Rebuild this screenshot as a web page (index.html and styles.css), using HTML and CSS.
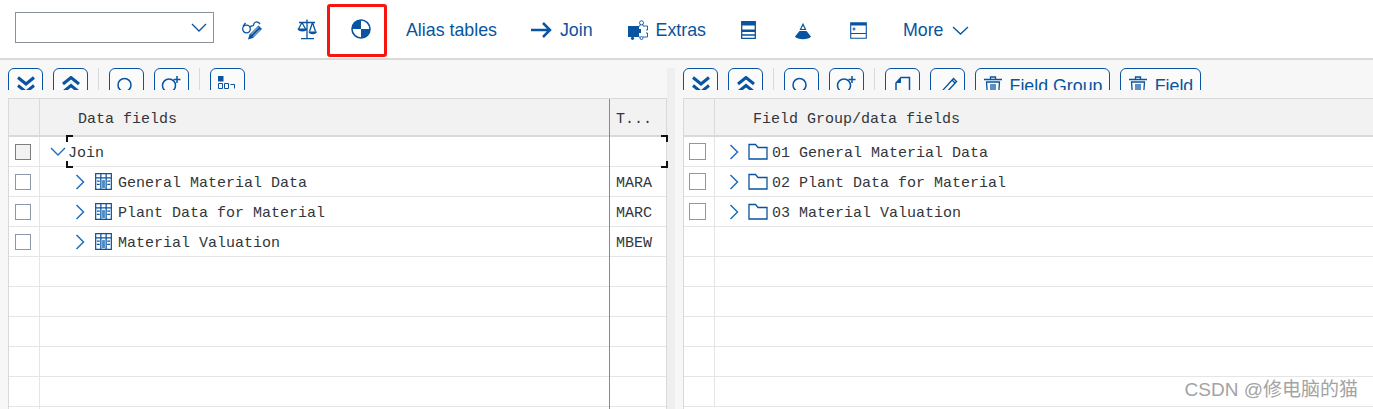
FILE: index.html
```html
<!DOCTYPE html>
<html lang="en">
<head>
<meta charset="utf-8">
<title>Join</title>
<link rel="stylesheet" href="styles.css">
</head>
<body>
<svg class="defs" width="0" height="0">
  <symbol id="down" viewBox="0 0 24 18"><path d="M4 1.500 12 8l8-6.500M4 9.500 12 16l8-6.500" fill="none" stroke="#0854a0" stroke-width="3"/></symbol>
  <symbol id="up" viewBox="0 0 24 18"><path d="M4 8 12 1.500 20 8M4 16l8-6.500 8 6.500" fill="none" stroke="#0854a0" stroke-width="3"/></symbol>
  <symbol id="search" viewBox="0 0 24 24"><circle cx="9.500" cy="9" r="6.500" fill="none" stroke="#0854a0" stroke-width="1.500"/></symbol>
  <symbol id="searchplus" viewBox="0 0 26 24"><circle cx="10" cy="9.500" r="6.500" fill="none" stroke="#0854a0" stroke-width="1.500"/><path d="M18 0v7M14.500 3.500h7" stroke="#0854a0" stroke-width="1.500"/></symbol>
  <symbol id="trash" viewBox="0 0 20 20"><path d="M1 3.500h18M7.500 3.500V1h5v2.500M3 6h14M3.500 6l1 14h11l1-14M8 8v12M10 8v12M12 8v12" fill="none" stroke="#0854a0" stroke-width="1.300"/></symbol>
  <symbol id="tbl" viewBox="0 0 18 18"><path d="M.7.7h16.600v16.600H.7zM6.200.7v16.600M11.800.7v16.600" fill="none" stroke="#0854a0" stroke-width="1.300"/><path d="M1 4.500h16v1.300H1zM2 8h3v1.200H2zM2 11.500h3v1.200H2zM13 8h3v1.200h-3zM13 11.500h3v1.200h-3z" fill="#0854a0"/><path d="M7.500 7.500h3v8.500h-3z" fill="#4a8ac4"/></symbol>
  <symbol id="folder" viewBox="0 0 20 17"><path d="M1 16V1.500h6.500L10 4.500h9V16z" fill="none" stroke="#0854a0" stroke-width="1.300"/></symbol>
  <symbol id="right" viewBox="0 0 10 16"><path d="M1.500 1 8.500 8l-7 7" fill="none" stroke="#1f6fc0" stroke-width="1.500"/></symbol>
</svg>

<header class="toolbar">
  <div class="select">
    <svg width="16" height="9" viewBox="0 0 16 9"><path d="M1 1l7 7 7-7" fill="none" stroke="#0854a0" stroke-width="1.300"/></svg>
  </div>
  <button class="tool i-glasses" type="button">
    <svg width="22" height="22" viewBox="0 0 22 22"><g fill="none" stroke="#0854a0" stroke-width="1.300"><circle cx="5.500" cy="11" r="3.800"/><path d="M2 8.500 4.500 5M9 9c.8-1 1.800-1.500 3-1M12 8c1-1.500.8-3 1.800-3.500M14 4.500c1.500-1 3.500-.5 5 1.500"/></g><path d="M7 21.500l1.500-5 9-9 3.500 3.500-9 9z" fill="#0854a0"/><path d="M10 16.500l7.500-7.500M12 18.500l7-7" stroke="#fff" stroke-width=".8"/></svg>
  </button>
  <button class="tool i-scale" type="button">
    <svg width="20" height="22" viewBox="0 0 20 22"><g fill="none" stroke="#0854a0" stroke-width="1.300"><path d="M10 1.500v18.500M4 20.700h13M2 4.500h16M5 4.500 1.500 11M5 4.500l3.500 6.500M15.500 4.500l-3 9M15.500 4.500l3 9"/></g><path d="M.5 10.500h10c0 4-10 4-10 0zM11.500 13.500h8.500c0 3.500-8.500 3.500-8.500 0z" fill="#0854a0"/></svg>
  </button>
  <button class="tool tool-marked" type="button">
    <svg width="20" height="20" viewBox="0 0 20 20"><circle cx="10" cy="10" r="9" fill="#fff" stroke="#0854a0" stroke-width="1.600"/><path d="M10 1a9 9 0 0 0-9 9h9zM10 10h9a9 9 0 0 1-9 9z" fill="#0854a0"/></svg>
  </button>
  <span class="label l-alias">Alias tables</span>
  <svg class="i-arrow" width="21" height="16" viewBox="0 0 21 16"><path d="M0 8h19M12 1l7 7-7 7" fill="none" stroke="#0854a0" stroke-width="2.500"/></svg>
  <span class="label l-join">Join</span>
  <svg class="i-extras" width="20" height="20" viewBox="0 0 20 20"><path d="M0 6h11v3h2v4h-2v4H0z" fill="#0854a0"/><g fill="none" stroke="#0854a0" stroke-width=".9"><path d="M11 6h1V4.500M15 4.500V6h4.500v4H18M18 13h1.500v4H15M12 17h-1"/><circle cx="13.500" cy="2.800" r="2"/><circle cx="13.500" cy="18" r="1.500"/></g><circle cx="4.500" cy="18.300" r="1.600" fill="#0854a0"/></svg>
  <span class="label l-extras">Extras</span>
  <svg class="i-rows" width="15" height="18" viewBox="0 0 15 18"><path d="M.7.7h13.600v16.600H.7zM.7 14h13.600" fill="none" stroke="#0854a0" stroke-width="1.300"/><path d="M1 1h13v3.500H1zM1 8.500h13V11H1z" fill="#0854a0"/></svg>
  <svg class="i-cone" width="16" height="17" viewBox="0 0 16 17"><path d="M8 1.200 10.500 6.500h-5z" fill="none" stroke="#0854a0" stroke-width="1.200"/><path d="M4.500 8h7L16 13.500c-2 3.500-14 3.500-16 0z" fill="#0854a0"/></svg>
  <svg class="i-window" width="17" height="17" viewBox="0 0 17 17"><path d="M.7.7h15.600v15.600H.7zM.7 11.500h15.600M2.500 7h3M4 5.500v3" fill="none" stroke="#0854a0" stroke-width="1.100"/><path d="M1 1h15v2.500H1z" fill="#0854a0"/></svg>
  <span class="label l-more">More</span>
  <svg class="i-caret" width="17" height="9" viewBox="0 0 17 9"><path d="M1 1l7.500 7L16 1" fill="none" stroke="#0854a0" stroke-width="1.300"/></svg>
</header>

<main class="workspace">
  <section class="pane pane-left">
    <div class="btnbar">
      <button class="btn" type="button"><svg width="24" height="18"><use href="#down"/></svg></button>
      <button class="btn" type="button"><svg width="24" height="18"><use href="#up"/></svg></button>
      <span class="sep"></span>
      <button class="btn" type="button"><svg width="24" height="24"><use href="#search"/></svg></button>
      <button class="btn" type="button"><svg width="26" height="24"><use href="#searchplus"/></svg></button>
      <span class="sep"></span>
      <button class="btn" type="button"><svg width="20" height="20" viewBox="0 0 20 20"><path d="M0 0h5.500v5.500H0z" fill="#0854a0"/><path d="M.5 7.500h4v5h-4zM6.500 7.500h4v5h-4zM12.500 8.500h4v4" fill="none" stroke="#0854a0"/></svg></button>
    </div>
    <div class="grid">
      <div class="row row-head"><div class="c-check"></div><div class="c-name head-name">Data fields</div><div class="c-t">T...</div></div>
      <div class="row row-join"><div class="c-check"><span class="box box-sel"></span></div><div class="c-name"><svg class="caret-join" width="16" height="9" viewBox="0 0 16 9"><path d="M1 1l7 7 7-7" fill="none" stroke="#1f6fc0" stroke-width="1.400"/></svg><span>Join</span></div><div class="c-t"></div>
        <i class="mark m-tl"></i><i class="mark m-bl"></i><i class="mark m-tr"></i><i class="mark m-br"></i>
      </div>
      <div class="row"><div class="c-check"><span class="box"></span></div><div class="c-name child"><svg class="chev" width="10" height="16"><use href="#right"/></svg><svg class="tbl" width="17" height="17"><use href="#tbl"/></svg><span>General Material Data</span></div><div class="c-t">MARA</div></div>
      <div class="row"><div class="c-check"><span class="box"></span></div><div class="c-name child"><svg class="chev" width="10" height="16"><use href="#right"/></svg><svg class="tbl" width="17" height="17"><use href="#tbl"/></svg><span>Plant Data for Material</span></div><div class="c-t">MARC</div></div>
      <div class="row"><div class="c-check"><span class="box"></span></div><div class="c-name child"><svg class="chev" width="10" height="16"><use href="#right"/></svg><svg class="tbl" width="17" height="17"><use href="#tbl"/></svg><span>Material Valuation</span></div><div class="c-t">MBEW</div></div>
      <div class="row"><div class="c-check"></div><div class="c-name"></div><div class="c-t"></div></div>
      <div class="row"><div class="c-check"></div><div class="c-name"></div><div class="c-t"></div></div>
      <div class="row"><div class="c-check"></div><div class="c-name"></div><div class="c-t"></div></div>
      <div class="row"><div class="c-check"></div><div class="c-name"></div><div class="c-t"></div></div>
      <div class="row"><div class="c-check"></div><div class="c-name"></div><div class="c-t"></div></div>
      <div class="row"><div class="c-check"></div><div class="c-name"></div><div class="c-t"></div></div>
    </div>
  </section>

  <div class="splitter"></div>

  <section class="pane pane-right">
    <div class="btnbar">
      <button class="btn" type="button"><svg width="24" height="18"><use href="#down"/></svg></button>
      <button class="btn" type="button"><svg width="24" height="18"><use href="#up"/></svg></button>
      <span class="sep"></span>
      <button class="btn" type="button"><svg width="24" height="24"><use href="#search"/></svg></button>
      <button class="btn" type="button"><svg width="26" height="24"><use href="#searchplus"/></svg></button>
      <span class="sep"></span>
      <button class="btn" type="button"><svg width="16" height="20" viewBox="0 0 16 20"><path d="M1 20V7l5-5.500h8.500V20" fill="none" stroke="#0854a0" stroke-width="1.500"/><path d="M1 7l5-5.500V7z" fill="#0854a0"/></svg></button>
      <button class="btn" type="button"><svg width="20" height="20" viewBox="0 0 20 20"><path d="M3 20l2-6L15.500 2.500l3 3L8 17z" fill="none" stroke="#0854a0" stroke-width="1.400"/><path d="M14 4l3 3" stroke="#0854a0" stroke-width="1.400"/></svg></button>
      <button class="btn btn-text btn-fg" type="button"><svg width="20" height="20"><use href="#trash"/></svg><span>Field Group</span></button>
      <button class="btn btn-text btn-f" type="button"><svg width="20" height="20"><use href="#trash"/></svg><span>Field</span></button>
    </div>
    <div class="grid grid-right">
      <div class="row row-head"><div class="c-check"></div><div class="c-name head-name">Field Group/data fields</div></div>
      <div class="row"><div class="c-check"><span class="box box-r"></span></div><div class="c-name child-r"><svg class="chev" width="10" height="16"><use href="#right"/></svg><svg class="folder" width="20" height="17"><use href="#folder"/></svg><span>01 General Material Data</span></div></div>
      <div class="row"><div class="c-check"><span class="box box-r"></span></div><div class="c-name child-r"><svg class="chev" width="10" height="16"><use href="#right"/></svg><svg class="folder" width="20" height="17"><use href="#folder"/></svg><span>02 Plant Data for Material</span></div></div>
      <div class="row"><div class="c-check"><span class="box box-r"></span></div><div class="c-name child-r"><svg class="chev" width="10" height="16"><use href="#right"/></svg><svg class="folder" width="20" height="17"><use href="#folder"/></svg><span>03 Material Valuation</span></div></div>
      <div class="row"><div class="c-check"></div><div class="c-name"></div></div>
      <div class="row"><div class="c-check"></div><div class="c-name"></div></div>
      <div class="row"><div class="c-check"></div><div class="c-name"></div></div>
      <div class="row"><div class="c-check"></div><div class="c-name"></div></div>
      <div class="row"><div class="c-check"></div><div class="c-name"></div></div>
      <div class="row"><div class="c-check"></div><div class="c-name"></div></div>
    </div>
    <div class="watermark">CSDN @修电脑的猫</div>
  </section>
</main>
</body>
</html>
```

FILE: styles.css
```css
* { box-sizing: border-box; }
html, body { margin: 0; height: 100%; overflow: hidden; }
body {
  display: flex;
  flex-direction: column;
  background: #f7f7f7;
  font-family: "Liberation Sans", Arial, sans-serif;
  color: #32363a;
}
.defs { position: absolute; }
button { font: inherit; padding: 0; background: none; }

/* top toolbar */
.toolbar {
  flex: none;
  height: 60px;
  display: flex;
  align-items: center;
  padding-left: 15px;
  background: #fff;
  border-bottom: 2px solid #d9d9d9;
  color: #0854a0;
}
.select {
  width: 199px;
  height: 31px;
  margin-top: -3px;
  display: flex;
  align-items: center;
  justify-content: flex-end;
  padding-right: 6px;
  background: #fff;
  border: 1px solid #89919a;
}
.tool {
  border: 0;
  display: flex;
  align-items: center;
  justify-content: center;
}
.i-glasses { margin-left: 27px; }
.i-scale { margin-left: 34px; }
.tool-marked {
  width: 60px;
  height: 53px;
  margin-left: 10px;
  margin-top: 2px;
  padding: 0 0 3px 8px;
  border: 3px solid #f5160f;
  border-radius: 3px;
  background: #fff;
}
.label { font-size: 17.8px; line-height: 24px; margin-top: 2px; white-space: nowrap; }
.l-alias { margin-left: 19px; }
.i-arrow { margin-left: 34px; margin-top: 2px; }
.l-join { margin-left: 8px; }
.i-extras { margin-left: 35px; margin-top: 2px; }
.l-extras { margin-left: 8px; }
.i-rows { margin-left: 35px; margin-top: 2px; }
.i-cone { margin-left: 39px; margin-top: 4px; }
.i-window { margin-left: 39px; margin-top: 3px; }
.l-more { margin-left: 36px; }
.i-caret { margin-left: 9px; margin-top: 3px; }

/* split panes */
.workspace { flex: 1; min-height: 0; display: flex; overflow: hidden; }
.pane { position: relative; display: flex; flex-direction: column; min-width: 0; }
.pane-left { width: 667px; padding-left: 8px; }
.pane-right { flex: 1; }
.splitter { flex: none; width: 16px; margin-top: 8px; background: linear-gradient(90deg, #edeff1 8px, #f7f7f7 8px); }

/* clipped button rows */
.btnbar {
  flex: none;
  height: 30px;
  margin-bottom: 8px;
  padding-top: 8px;
  display: flex;
  gap: 10px;
  overflow: hidden;
}
.btn {
  flex: none;
  width: 35px;
  height: 34px;
  padding-top: 7px;
  display: flex;
  justify-content: center;
  align-items: flex-start;
  background: #fbfbfb;
  border: 1.5px solid #0854a0;
  border-radius: 6px;
  color: #0854a0;
}
.btn-text { font-size: 17.8px; gap: 7px; line-height: 20px; }
.btn-fg { width: 135px; }
.btn-f { width: 81px; }
.sep { flex: none; width: 1px; height: 22px; background: #d9d9d9; }

/* tree tables */
.grid {
  flex: 1;
  min-height: 0;
  background: #fff;
  border-left: 1px solid #d9d9d9;
  border-right: 1px solid #d9d9d9;
  border-top: 1px solid #d9d9d9;
  font-family: "Liberation Mono", "Courier New", monospace;
  font-size: 15px;
  color: #32363a;
}
.grid-right { border-right: 0; }
.row {
  position: relative;
  height: 30px;
  display: flex;
}
.row-head { height: 38px; background: #f2f2f2; }
.c-check, .c-name, .c-t { border-bottom: 1px solid #e5e5e5; }
.row-head .c-check, .row-head .c-name, .row-head .c-t { border-bottom: 2px solid #d9d9d9; }
.c-check {
  flex: none;
  width: 31px;
  display: flex;
  align-items: center;
  justify-content: center;
  padding-right: 2px;
  border-right: 1px solid #e5e5e5;
}
.row-head .c-check { border-right-color: #d9d9d9; }
.c-name { flex: 1; min-width: 0; display: flex; align-items: center; white-space: nowrap; }
.c-name span { padding-top: 4px; }
.c-t {
  flex: none;
  width: 56px;
  margin-left: 1px;
  padding: 4px 0 0 6px;
  display: flex;
  align-items: center;
  box-shadow: -1px 0 0 #8a8a8a;
}
.head-name { padding: 4px 0 0 38px; }
.box {
  width: 16px;
  height: 16px;
  background: #fff;
  border: 1px solid #8a98a8;
}
.box-sel { background: #f2f2f2; border-color: #7d7d7d; }
.box-r { width: 17px; height: 17px; margin-right: 2px; }
.caret-join { margin-left: 10px; margin-right: 2px; }
.child { padding-left: 35px; }
.child .tbl { margin-left: 10px; margin-right: 6px; }
.child-r { padding-left: 14px; }
.child-r .folder { margin-left: 9px; margin-right: 4px; }

/* selection corners of the focused row */
.mark { position: absolute; width: 7px; height: 7px; border: 0 solid #111; }
.m-tl { left: 57px; top: -2px; border-width: 2px 0 0 2px; }
.m-bl { left: 57px; bottom: -1px; border-width: 0 0 2px 2px; }
.m-tr { right: -2px; top: -2px; border-width: 2px 2px 0 0; }
.m-br { right: -2px; bottom: -1px; border-width: 0 2px 2px 0; }

.watermark {
  position: absolute;
  right: 15px;
  bottom: 8px;
  font-family: "Liberation Sans", "Noto Sans CJK SC", sans-serif;
  font-size: 19px;
  color: #a3a3a3;
  white-space: nowrap;
}
```
